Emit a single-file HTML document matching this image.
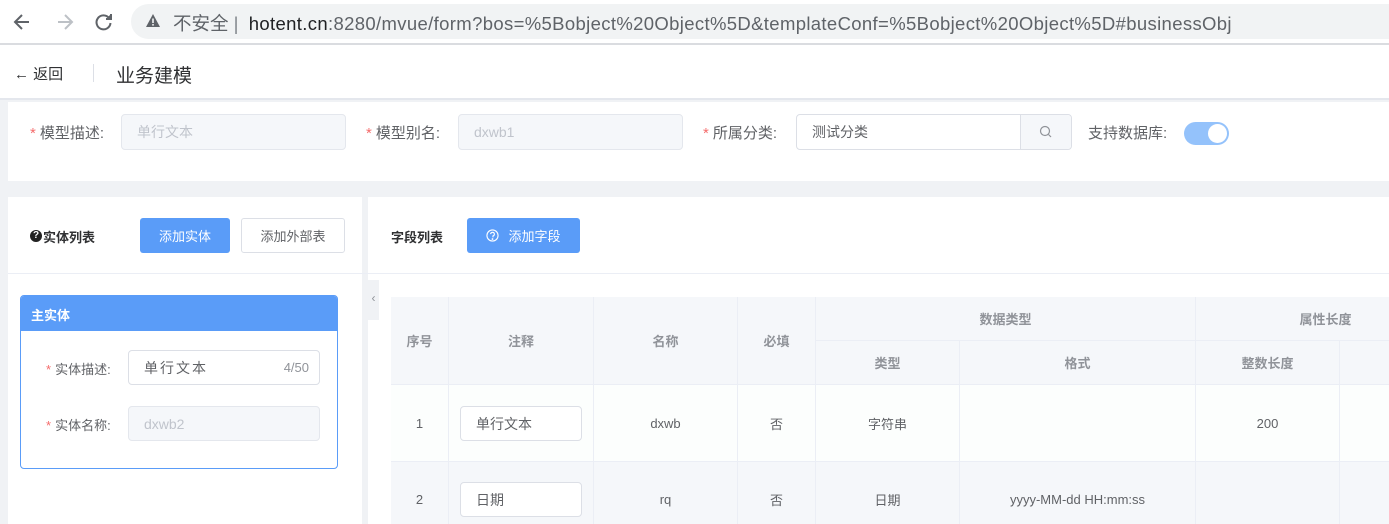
<!DOCTYPE html>
<html><head><meta charset="utf-8"><style>
*{margin:0;padding:0;box-sizing:border-box}
html,body{width:1389px;height:524px;overflow:hidden}
body{background:#f0f2f5;font-family:"Liberation Sans","Noto Sans CJK SC",sans-serif;position:relative;color:#303133}
.a{position:absolute}
.cell{position:absolute;border-right:1px solid #ebeef5;border-bottom:1px solid #ebeef5;display:flex;align-items:center;justify-content:center;font-size:13px;color:#606266}
.h{background:#f5f7fa;color:#909399;font-weight:bold}
.inp{position:absolute;border:1px solid #dcdfe6;border-radius:4px;background:#fff;font-size:14px;display:flex;align-items:center;padding-left:15px;color:#606266}
.dis{background:#f5f7fa;border-color:#e4e7ed;color:#c0c4cc}
.lbl{position:absolute;font-size:14px;color:#606266}
.lbl b{color:#f56c6c;font-weight:normal;margin-right:4px}
.btn{position:absolute;border-radius:3px;font-size:13px;display:flex;align-items:center;justify-content:center}
</style></head><body>
<div class="a" style="left:0;top:0;width:1389px;height:43px;background:#fff"></div>
<div class="a" style="left:0;top:43px;width:1389px;height:2px;background:#dadce0"></div>
<svg class="a" style="left:10px;top:10px" width="110" height="24" viewBox="0 0 110 24" fill="none" stroke-width="2">
<path d="M19 12H6M12 5l-7 7 7 7" stroke="#5f6368"/>
<path d="M48 12H62M55 5l7 7-7 7" stroke="#bdc1c6"/>
<path d="M99 8a7 7 0 1 0 1.5 5" stroke="#5f6368"/><path d="M101 4v5h-5" stroke="#5f6368" fill="#5f6368"/>
</svg>
<div class="a" style="left:131px;top:4px;width:1300px;height:35px;border-radius:18px;background:#f1f3f4"></div>
<svg class="a" style="left:145px;top:13px" width="16" height="16" viewBox="0 0 16 16"><path d="M8 1L15 14H1Z" fill="#5f6368"/><rect x="7.2" y="5.5" width="1.6" height="4.5" fill="#f1f3f4"/><rect x="7.2" y="11" width="1.6" height="1.6" fill="#f1f3f4"/></svg>
<div class="a" style="left:173px;top:10px;font-size:18.5px;color:#5f6368;white-space:nowrap">不安全 <span style="color:#80868b">|</span>&nbsp; <span style="color:#202124;letter-spacing:0.35px">hotent.cn</span><span style="letter-spacing:0.35px">:8280/mvue/form?bos=%5Bobject%20Object%5D&amp;templateConf=%5Bobject%20Object%5D#businessObj</span></div>

<div class="a" style="left:0;top:45px;width:1389px;height:55px;background:#fff;border-bottom:2px solid #e4e7ed"></div>
<div class="a" style="left:14px;top:63px;font-size:15px;color:#303133">←&nbsp;返回</div>
<div class="a" style="left:93px;top:64px;width:1px;height:18px;background:#dcdfe6"></div>
<div class="a" style="left:116px;top:61px;font-size:19px;color:#303133">业务建模</div>

<div class="a" style="left:8px;top:102px;width:1381px;height:79px;background:#fff"></div>
<div class="lbl" style="left:30px;top:122px;font-size:15px"><b>*</b>模型描述:</div>
<div class="inp dis" style="left:121px;top:114px;width:225px;height:36px">单行文本</div>
<div class="lbl" style="left:366px;top:122px;font-size:15px"><b>*</b>模型别名:</div>
<div class="inp dis" style="left:458px;top:114px;width:225px;height:36px">dxwb1</div>
<div class="lbl" style="left:703px;top:122px;font-size:15px"><b>*</b>所属分类:</div>
<div class="inp" style="left:796px;top:114px;width:276px;height:36px;color:#606266">测试分类</div>
<div class="a" style="left:1020px;top:115px;width:51px;height:34px;background:#f5f7fa;border-left:1px solid #dcdfe6;border-radius:0 4px 4px 0"></div>
<svg class="a" style="left:1039px;top:125px" width="14" height="14" viewBox="0 0 14 14" fill="none" stroke="#909399" stroke-width="1.2"><circle cx="6" cy="6" r="4.5"/><path d="M9.5 9.5L12 12"/></svg>
<div class="lbl" style="left:1088px;top:122px;font-size:15px">支持数据库:</div>
<div class="a" style="left:1184px;top:122px;width:45px;height:23px;border-radius:12px;background:#94c2fb"></div>
<div class="a" style="left:1208px;top:124px;width:19px;height:19px;border-radius:50%;background:#fff"></div>

<div class="a" style="left:8px;top:197px;width:354px;height:327px;background:#fff"></div>
<div class="a" style="left:368px;top:197px;width:1021px;height:327px;background:#fff"></div>
<div class="a" style="left:8px;top:273px;width:1381px;height:1px;background:#ebeef5"></div>
<div class="a" style="left:362px;top:295px;width:4px;height:229px;background:#f0f2f5"></div>

<div class="a" style="left:30px;top:230px;width:12px;height:12px;border-radius:50%;background:#222;color:#fff;font-size:10px;font-weight:bold;text-align:center;line-height:12px">?</div>
<div class="a" style="left:43px;top:227px;font-size:13px;font-weight:bold;color:#303133">实体列表</div>
<div class="btn" style="left:140px;top:218px;width:90px;height:35px;background:#5a9cf8;color:#fff">添加实体</div>
<div class="btn" style="left:241px;top:218px;width:104px;height:35px;border:1px solid #dcdfe6;color:#606266">添加外部表</div>

<div class="a" style="left:20px;top:295px;width:318px;height:174px;border:1px solid #5a9cf8;border-radius:4px;overflow:hidden">
<div style="height:35px;background:#5a9cf8;color:#fff;font-size:13px;font-weight:bold;padding:9px 0 0 10px">主实体</div></div>
<div class="lbl" style="left:46px;top:359px;font-size:13px"><b>*</b>实体描述:</div>
<div class="inp" style="left:128px;top:350px;width:192px;height:35px;letter-spacing:2px">单行文本<span style="position:absolute;right:10px;font-size:13px;color:#909399;letter-spacing:0">4/50</span></div>
<div class="lbl" style="left:46px;top:415px;font-size:13px"><b>*</b>实体名称:</div>
<div class="inp dis" style="left:128px;top:406px;width:192px;height:35px">dxwb2</div>

<div class="a" style="left:391px;top:227px;font-size:13px;font-weight:bold;color:#303133">字段列表</div>
<div class="btn" style="left:467px;top:218px;width:113px;height:35px;background:#5a9cf8;color:#fff"><svg width="13" height="13" viewBox="0 0 14 14" fill="none" stroke="#fff" stroke-width="1.2" style="margin-right:9px"><circle cx="7" cy="7" r="6"/><path d="M5 5.5a2 2 0 1 1 2.5 2V9"/><circle cx="7" cy="10.8" r="0.4" fill="#fff"/></svg>添加字段</div>
<div class="a" style="left:368px;top:280px;width:11px;height:40px;background:#f0f2f5;color:#909399;font-size:12px;text-align:center;line-height:36px">‹</div>

<div class="a" style="left:391px;top:297px;width:998px;height:227px;border-top:1px solid #ebeef5;border-left:1px solid #ebeef5"></div>
<div class="cell h" style="left:391px;top:297px;width:58px;height:88px">序号</div>
<div class="cell h" style="left:449px;top:297px;width:145px;height:88px">注释</div>
<div class="cell h" style="left:594px;top:297px;width:144px;height:88px">名称</div>
<div class="cell h" style="left:738px;top:297px;width:78px;height:88px">必填</div>
<div class="cell h" style="left:816px;top:297px;width:380px;height:44px">数据类型</div>
<div class="cell h" style="left:1196px;top:297px;width:260px;height:44px">属性长度</div>
<div class="cell h" style="left:816px;top:341px;width:144px;height:44px">类型</div>
<div class="cell h" style="left:960px;top:341px;width:236px;height:44px">格式</div>
<div class="cell h" style="left:1196px;top:341px;width:144px;height:44px">整数长度</div>
<div class="cell h" style="left:1340px;top:341px;width:144px;height:44px"></div>

<div class="cell" style="left:391px;top:385px;width:58px;height:77px;background:#fcfefd">1</div>
<div class="cell" style="left:449px;top:385px;width:145px;height:77px;background:#fcfefd"></div>
<div class="cell" style="left:594px;top:385px;width:144px;height:77px;background:#fcfefd">dxwb</div>
<div class="cell" style="left:738px;top:385px;width:78px;height:77px;background:#fcfefd">否</div>
<div class="cell" style="left:816px;top:385px;width:144px;height:77px;background:#fcfefd">字符串</div>
<div class="cell" style="left:960px;top:385px;width:236px;height:77px;background:#fcfefd"></div>
<div class="cell" style="left:1196px;top:385px;width:144px;height:77px;background:#fcfefd">200</div>
<div class="cell" style="left:1340px;top:385px;width:144px;height:77px;background:#fcfefd"></div>

<div class="cell" style="left:391px;top:462px;width:58px;height:76px;background:#f5f7fa">2</div>
<div class="cell" style="left:449px;top:462px;width:145px;height:76px;background:#f5f7fa"></div>
<div class="cell" style="left:594px;top:462px;width:144px;height:76px;background:#f5f7fa">rq</div>
<div class="cell" style="left:738px;top:462px;width:78px;height:76px;background:#f5f7fa">否</div>
<div class="cell" style="left:816px;top:462px;width:144px;height:76px;background:#f5f7fa">日期</div>
<div class="cell" style="left:960px;top:462px;width:236px;height:76px;background:#f5f7fa">yyyy-MM-dd HH:mm:ss</div>
<div class="cell" style="left:1196px;top:462px;width:144px;height:76px;background:#f5f7fa"></div>
<div class="cell" style="left:1340px;top:462px;width:144px;height:76px;background:#f5f7fa"></div>

<div class="inp" style="left:460px;top:406px;width:122px;height:35px;font-size:14px">单行文本</div>
<div class="inp" style="left:460px;top:482px;width:122px;height:35px;font-size:14px">日期</div>
</body></html>
